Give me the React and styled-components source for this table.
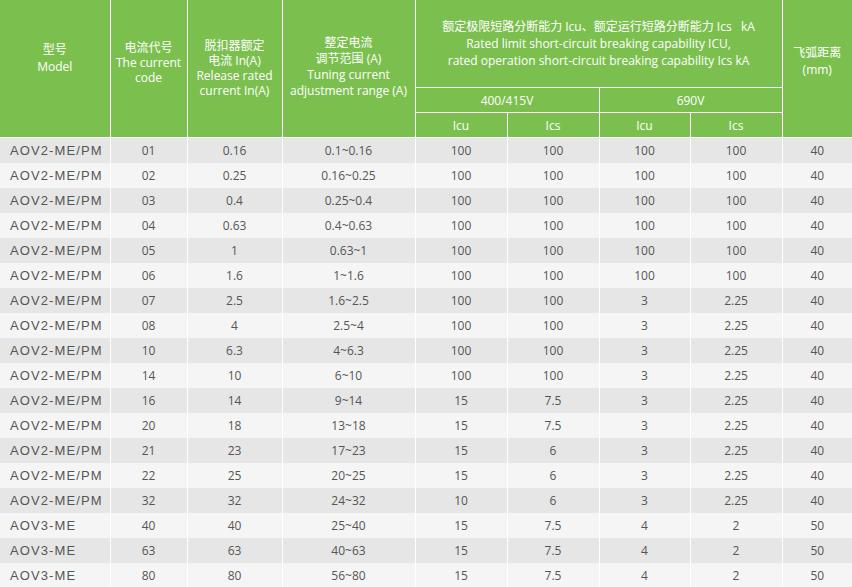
import React from "react";
import styled, { createGlobalStyle } from "styled-components";

const GlobalStyle = createGlobalStyle`
  html, body {
    margin: 0;
    padding: 0;
    background: #ffffff;
  }
`;

const GREEN = "#7bc04e";

const Table = styled.table`
  width: 852px;
  table-layout: fixed;
  border-collapse: collapse;
  font-family: "Open Sans", "Noto Sans CJK SC", sans-serif;
`;

const HeadCell = styled.th`
  background: ${GREEN};
  color: #ffffff;
  font-weight: normal;
  font-size: 12px;
  line-height: ${(p) => p.$lh || 15}px;
  height: ${(p) => p.$h || 24}px;
  padding: 0 2px ${(p) => p.$pb || 0}px;
  text-align: center;
  vertical-align: middle;
  border: 1px solid #ffffff;
  border-top: none;
  &:first-child {
    border-left: none;
  }
  &:last-child {
    border-right: none;
  }
`;

const Row = styled.tr`
  background: ${(p) => (p.$alt ? "#f5f5f5" : "#e6e6e6")};
  height: 25px;
`;

const Cell = styled.td`
  font-family: ${(p) =>
    p.$model ? '"Liberation Sans", Arial, sans-serif' : '"Open Sans", sans-serif'};
  font-size: ${(p) => (p.$model ? 13 : 12)}px;
  letter-spacing: ${(p) => (p.$model ? "1.1px" : "0")};
  color: #555555;
  text-align: ${(p) => (p.$model ? "left" : "center")};
  padding: 0 0 0 ${(p) => (p.$model ? 10 : 0)}px;
  border-right: 1px solid #ffffff;
  white-space: nowrap;
  &:last-child {
    border-right: none;
  }
`;

const widths = [110, 77, 95, 133, 92, 92, 91, 92, 70];

const rows = [
  ["AOV2-ME/PM", "01", "0.16", "0.1~0.16", "100", "100", "100", "100", "40"],
  ["AOV2-ME/PM", "02", "0.25", "0.16~0.25", "100", "100", "100", "100", "40"],
  ["AOV2-ME/PM", "03", "0.4", "0.25~0.4", "100", "100", "100", "100", "40"],
  ["AOV2-ME/PM", "04", "0.63", "0.4~0.63", "100", "100", "100", "100", "40"],
  ["AOV2-ME/PM", "05", "1", "0.63~1", "100", "100", "100", "100", "40"],
  ["AOV2-ME/PM", "06", "1.6", "1~1.6", "100", "100", "100", "100", "40"],
  ["AOV2-ME/PM", "07", "2.5", "1.6~2.5", "100", "100", "3", "2.25", "40"],
  ["AOV2-ME/PM", "08", "4", "2.5~4", "100", "100", "3", "2.25", "40"],
  ["AOV2-ME/PM", "10", "6.3", "4~6.3", "100", "100", "3", "2.25", "40"],
  ["AOV2-ME/PM", "14", "10", "6~10", "100", "100", "3", "2.25", "40"],
  ["AOV2-ME/PM", "16", "14", "9~14", "15", "7.5", "3", "2.25", "40"],
  ["AOV2-ME/PM", "20", "18", "13~18", "15", "7.5", "3", "2.25", "40"],
  ["AOV2-ME/PM", "21", "23", "17~23", "15", "6", "3", "2.25", "40"],
  ["AOV2-ME/PM", "22", "25", "20~25", "15", "6", "3", "2.25", "40"],
  ["AOV2-ME/PM", "32", "32", "24~32", "10", "6", "3", "2.25", "40"],
  ["AOV3-ME", "40", "40", "25~40", "15", "7.5", "4", "2", "50"],
  ["AOV3-ME", "63", "63", "40~63", "15", "7.5", "4", "2", "50"],
  ["AOV3-ME", "80", "80", "56~80", "15", "7.5", "4", "2", "50"],
];

export default function App() {
  return (
    <>
      <GlobalStyle />
      <Table>
        <colgroup>
          {widths.map((w, i) => (
            <col key={i} style={{ width: w }} />
          ))}
        </colgroup>
        <thead>
          <tr>
            <HeadCell rowSpan={3} $lh={17} $pb={22}>
              型号
              <br />
              Model
            </HeadCell>
            <HeadCell rowSpan={3} $lh={15} $pb={12}>
              电流代号
              <br />
              The current
              <br />
              code
            </HeadCell>
            <HeadCell rowSpan={3} $lh={15} $pb={2}>
              脱扣器额定
              <br />
              电流 In(A)
              <br />
              Release rated
              <br />
              current In(A)
            </HeadCell>
            <HeadCell rowSpan={3} $lh={16} $pb={4}>
              整定电流
              <br />
              调节范围 (A)
              <br />
              Tuning current
              <br />
              adjustment range (A)
            </HeadCell>
            <HeadCell colSpan={4} $h={87} $lh={17}>
              额定极限短路分断能力 Icu、额定运行短路分断能力 Ics&nbsp;&nbsp;&nbsp;kA
              <br />
              Rated limit short-circuit breaking capability ICU,
              <br />
              rated operation short-circuit breaking capability Ics kA
            </HeadCell>
            <HeadCell rowSpan={3} $lh={17} $pb={16}>
              飞弧距离
              <br />
              (mm)
            </HeadCell>
          </tr>
          <tr>
            <HeadCell colSpan={2}>400/415V</HeadCell>
            <HeadCell colSpan={2}>690V</HeadCell>
          </tr>
          <tr>
            <HeadCell>Icu</HeadCell>
            <HeadCell>Ics</HeadCell>
            <HeadCell>Icu</HeadCell>
            <HeadCell>Ics</HeadCell>
          </tr>
        </thead>
        <tbody>
          {rows.map((r, i) => (
            <Row key={i} $alt={i % 2 === 1}>
              {r.map((v, j) => (
                <Cell key={j} $model={j === 0}>
                  {v}
                </Cell>
              ))}
            </Row>
          ))}
        </tbody>
      </Table>
    </>
  );
}
